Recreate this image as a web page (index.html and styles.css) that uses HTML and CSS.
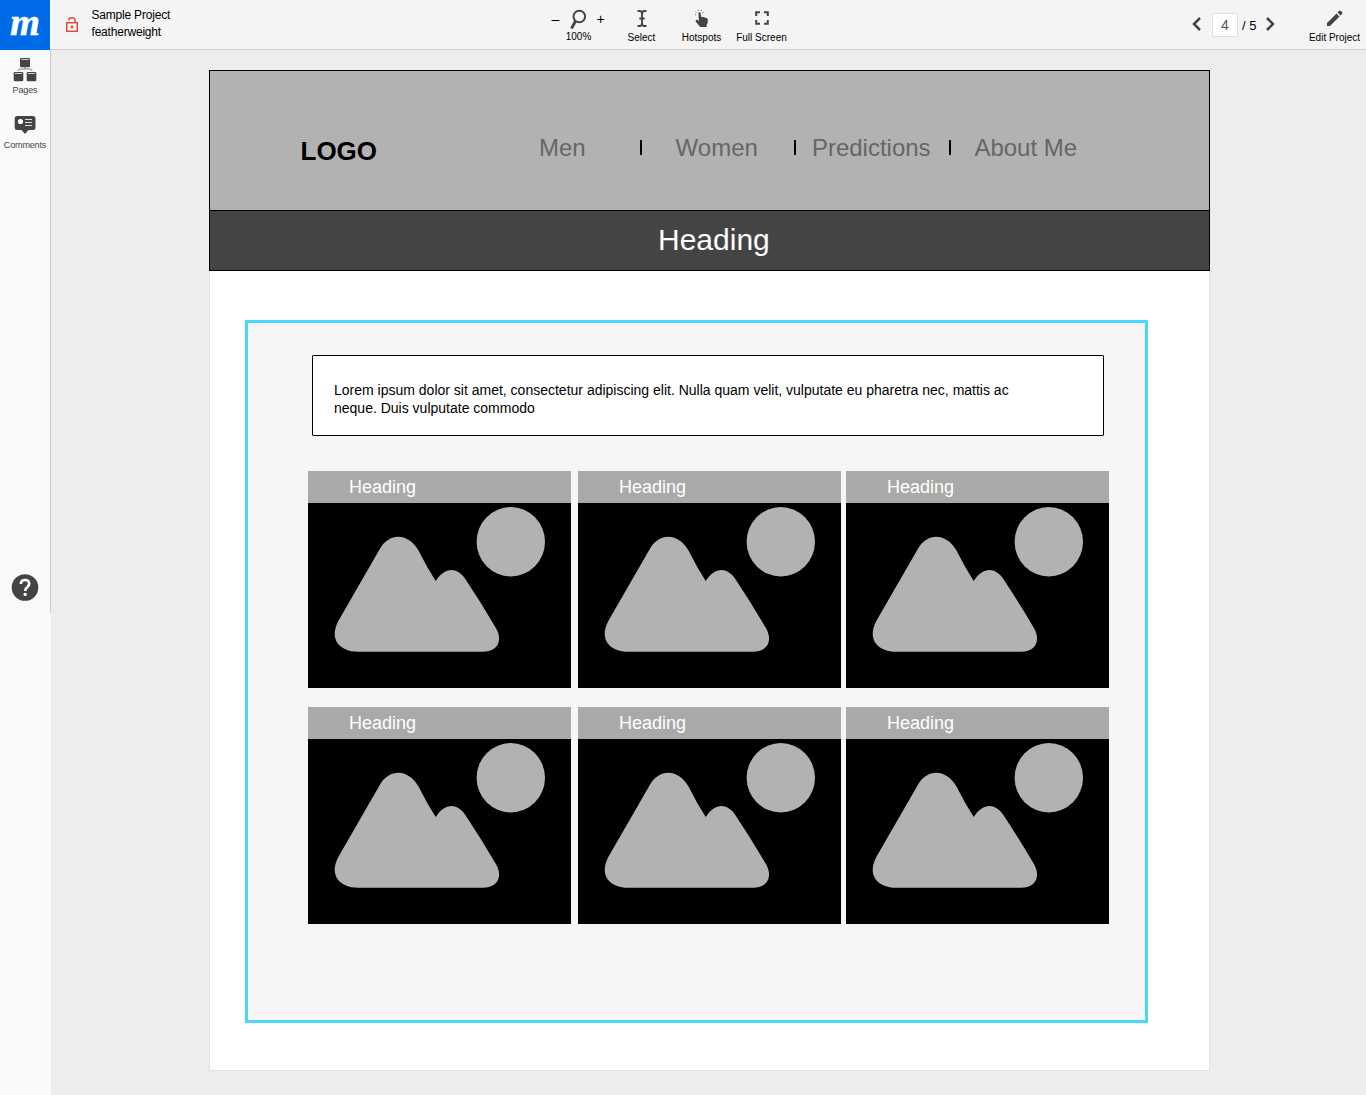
FILE: index.html
```html
<!DOCTYPE html>
<html lang="en">
<head>
<meta charset="utf-8">
<title>Sample Project</title>
<link rel="stylesheet" href="styles.css">
</head>
<body>
<svg width="0" height="0" class="defs">
  <symbol id="picture" viewBox="0 0 263 185">
    <path d="M30.3 118L71.500 46.500C81 29.500 100 29.500 110.500 47.500Q119 64.500 127.700 78C137 63.500 149 64 157 75.500Q173 99.500 188.500 126C194.500 137.500 190 148.700 175 148.700H50C32 148.700 20.500 136.500 30.300 118Z"/>
    <ellipse cx="202.800" cy="38.700" rx="34.200" ry="34.700"/>
  </symbol>
</svg>
<header class="topbar">
  <div class="brand"><span>m</span></div>
  <svg class="lock" width="14" height="18" viewBox="0 0 14 18" fill="none" stroke="#e04b38" stroke-width="1.500"><rect x="1.700" y="6.700" width="10.600" height="8.600"/><path d="M3.700 4.500V4Q3.700 1.700 7 1.700Q10 1.700 10 4.300V6.700"/><circle cx="7" cy="11" r="1.400" fill="#e04b38" stroke="none"/></svg>
  <div class="project">Sample Project<br>featherweight</div>
  <div class="zoom">
    <span class="step">–</span>
    <div class="tool"><svg width="18" height="22" viewBox="0 0 18 22" fill="none" stroke="#444"><circle cx="10.300" cy="7.500" r="5.800" stroke-width="2"/><path d="M6.500 12L2.500 19.500" stroke-width="2.800"/></svg><span>100%</span></div>
    <span class="step">+</span>
  </div>
  <div class="tool select"><svg width="18" height="22" viewBox="0 0 18 22" fill="none" stroke="#444" stroke-width="1.900"><path d="M4.500 2H6.500Q9 2 9 4.500V14.500Q9 17 6.500 17H4.500M13.500 2H11.500Q9 2 9 4.500M13.500 17H11.500Q9 17 9 14.500M6.300 9.500H11.700"/></svg><span>Select</span></div>
  <div class="tool"><svg width="18" height="22" viewBox="0 0 18 22" fill="#444"><path d="M5.400 4.500Q5.400 3.300 6.500 3.300Q7.600 3.300 7.700 4.500L8.100 8Q9.200 7.400 10 8.300Q11.100 7.700 12 8.800Q14.800 8.500 14.800 10.700V13.500L13.600 16V18H7.300L2.600 12.500Q2.400 10.300 4.300 10.800L5.900 11.900Z"/><path d="M3 5.500L2 6M3.500 3.500L2.300 2.700M5.300 2V.8M8 2L8.800 1M9.200 4L10.500 3.500" stroke="#777" stroke-width="1"/></svg><span>Hotspots</span></div>
  <div class="tool"><svg width="18" height="22" viewBox="0 0 18 22" fill="none" stroke="#444" stroke-width="2"><path d="M3.200 7V3.200H7M11 3.200H14.800V7M14.800 11V14.800H11M7 14.800H3.200V11"/></svg><span>Full Screen</span></div>
  <div class="pager">
    <svg width="10" height="16" viewBox="0 0 10 16" fill="none" stroke="#444" stroke-width="2.500"><path d="M8 2L2 8L8 14"/></svg>
    <div class="number">4</div><span>/ 5</span>
    <svg width="10" height="16" viewBox="0 0 10 16" fill="none" stroke="#444" stroke-width="2.500"><path d="M2 2L8 8L2 14"/></svg>
  </div>
  <div class="tool edit"><svg width="18" height="22" viewBox="0 0 18 22" fill="#444"><path d="M1 14L10.500 4.500L13.500 7.500L4 17H1ZM11.500 3.500L13 2Q14 1.200 15 2L16 3Q17 4 16 5L14.500 6.500Z"/></svg><span>Edit Project</span></div>
</header>
<div class="main">
  <aside class="sidebar">
    <div class="rail">
      <div class="side pages"><svg width="26" height="26" viewBox="0 0 26 26" fill="#444"><path d="M13 10V12M6 14Q6 12 8 12H18Q20 12 20 14" fill="none" stroke="#888"/><rect x="8" y="1" width="10" height="9.300" rx="1.300"/><rect x="1.700" y="15" width="9.600" height="9.300" rx="1.300"/><rect x="14.700" y="15" width="9.600" height="9.300" rx="1.300"/><path d="M9.300 2.500H16.700M3 16.500H10M16 16.500H23" stroke="#ccc"/></svg><span>Pages</span></div>
      <div class="side comments"><svg width="26" height="22" viewBox="0 0 26 22"><path d="M5 1H21Q23.500 1 23.500 3.500V12.500Q23.500 15 21 15H16.500L13 19L9.500 15H5Q2.700 15 2.700 12.500V3.500Q2.700 1 5 1Z" fill="#444"/><circle cx="8.500" cy="6.500" r="2.600" fill="#fff"/><path d="M13 4.500H20M13 7.500H20M13 10.500H20" stroke="#ddd"/></svg><span>Comments</span></div>
      <svg class="help" width="28" height="28" viewBox="0 0 28 28"><circle cx="14" cy="14.500" r="13.300" fill="#444"/><path d="M9.900 11Q9.900 7 14 7Q18.200 7 18.200 10.800Q18.200 12.800 16 14.400Q14.200 15.700 14.200 18" fill="none" stroke="#fff" stroke-width="2.700"/><rect x="12.700" y="20" width="2.900" height="2.900" fill="#fff"/></svg>
    </div>
  </aside>
  <main class="canvas">
    <div class="page">
      <div class="masthead">
        <div class="logo">LOGO</div>
        <nav class="nav"><a>Men</a><a>Women</a><a>Predictions</a><a>About Me</a></nav>
      </div>
      <div class="banner">Heading</div>
      <section class="content">
        <p class="intro">Lorem ipsum dolor sit amet, consectetur adipiscing elit. Nulla quam velit, vulputate eu pharetra nec, mattis ac<br>neque. Duis vulputate commodo</p>
        <div class="cards">
          <article><h2>Heading</h2><svg><use href="#picture"/></svg></article>
          <article><h2>Heading</h2><svg><use href="#picture"/></svg></article>
          <article><h2>Heading</h2><svg><use href="#picture"/></svg></article>
          <article><h2>Heading</h2><svg><use href="#picture"/></svg></article>
          <article><h2>Heading</h2><svg><use href="#picture"/></svg></article>
          <article><h2>Heading</h2><svg><use href="#picture"/></svg></article>
        </div>
      </section>
    </div>
  </main>
</div>
</body>
</html>
```
FILE: styles.css
```css
* { box-sizing: border-box; }
body { margin: 0; height: 1095px; overflow: hidden; background: #ededed; color: #000; font-family: "Liberation Sans", Arial, sans-serif; }
svg { display: block; flex: none; }
.defs { position: absolute; }

.topbar { display: flex; height: 50px; background: #f4f4f4; border-bottom: 1px solid #d0d0d0; }
.brand { width: 50px; height: 50px; flex: none; background: #006be6; color: #fff; text-align: center; font: italic bold 38px/44px "Liberation Serif", serif; -webkit-text-stroke: .6px #fff; }
.lock { margin: 16px 0 0 15px; }
.project { width: 460px; margin: 7px 0 0 12.500px; font-size: 12px; line-height: 17px; letter-spacing: -.2px; }
.zoom { display: flex; width: 60px; }
.zoom .tool { width: 30px; margin: 0 3px 0 1px; padding-top: 9px; }
.zoom .tool svg { margin-left: -1px; }
.zoom .tool span { margin-top: 0; }
.step { width: 11px; padding-top: 10px; font-size: 14px; line-height: 18px; }
.tool { display: flex; flex-direction: column; align-items: center; width: 60px; padding-top: 9px; font-size: 10px; line-height: 12px; white-space: nowrap; flex: none; }
.tool span { margin-top: 1px; }
.pager { display: flex; align-items: center; margin-left: auto; height: 48px; font-size: 14px; }
.number { width: 26px; height: 24px; margin: 2px 4px 0 10px; border: 1px solid #ddd; border-radius: 2px; background: #fff; color: #555; text-align: center; line-height: 23px; }
.pager span { width: 23px; padding-top: 2px; font-size: 13px; }
.edit { margin-left: 29px; width: 62px; }
.edit span { margin-left: -1px; }

.main { display: flex; height: 1045px; }
.sidebar { width: 51px; flex: none; background: #f9f9f9; }
.rail { display: flex; flex-direction: column; align-items: center; height: 563px; border-right: 1px solid #ccc; padding-top: 7px; }
.side { display: flex; flex-direction: column; align-items: center; color: #444; font-size: 9px; line-height: 12px; letter-spacing: -.15px; }
.pages { height: 58px; }
.pages span { margin-top: 1px; }
.comments span { margin-top: 2px; }
.help { margin: auto 0 12px; }

.canvas { padding: 20px 0 0 158px; }
.page { width: 1001px; height: 1001px; background: #fff; box-shadow: inset 0 0 0 1px #e2e2e2; }
.masthead { display: flex; height: 140px; background: #b2b2b2; border: 1px solid #000; border-bottom: 0; }
.logo { width: 275px; padding: 65px 0 0 90.500px; font-size: 26px; line-height: 31px; font-weight: bold; }
.nav { display: grid; grid-template-columns: repeat(4, 154.500px); height: 30px; margin-top: 62px; color: #666; font-size: 24px; line-height: 30px; text-align: center; }
.nav a + a { background: linear-gradient(#000, #000) 0 7px / 2px 15px no-repeat; }
.banner { height: 61px; padding: 11px 0 0 448px; border: 1px solid #000; background: #444; color: #fff; font-size: 30px; line-height: 36px; }
.content { width: 903px; height: 703px; margin: 49px 0 0 36px; padding: 32px 0 0 60px; border: 3px solid #4bd7fb; background: #f6f6f6; }
.intro { width: 792px; height: 81px; margin: 0 0 35px 4px; padding: 25px 0 0 21px; border: 1px solid #000; border-radius: 1px; background: #fff; font-size: 14px; line-height: 18px; white-space: nowrap; }
.cards { display: grid; grid-template-columns: 270px 268px 263px; row-gap: 19px; }
article { width: 263px; }
article h2 { height: 32px; margin: 0; padding-left: 41px; background: #a9a9a9; color: #fff; font-size: 18px; line-height: 32px; font-weight: normal; }
article svg { width: 263px; height: 185px; background: #000; fill: #b2b2b2; }
```
